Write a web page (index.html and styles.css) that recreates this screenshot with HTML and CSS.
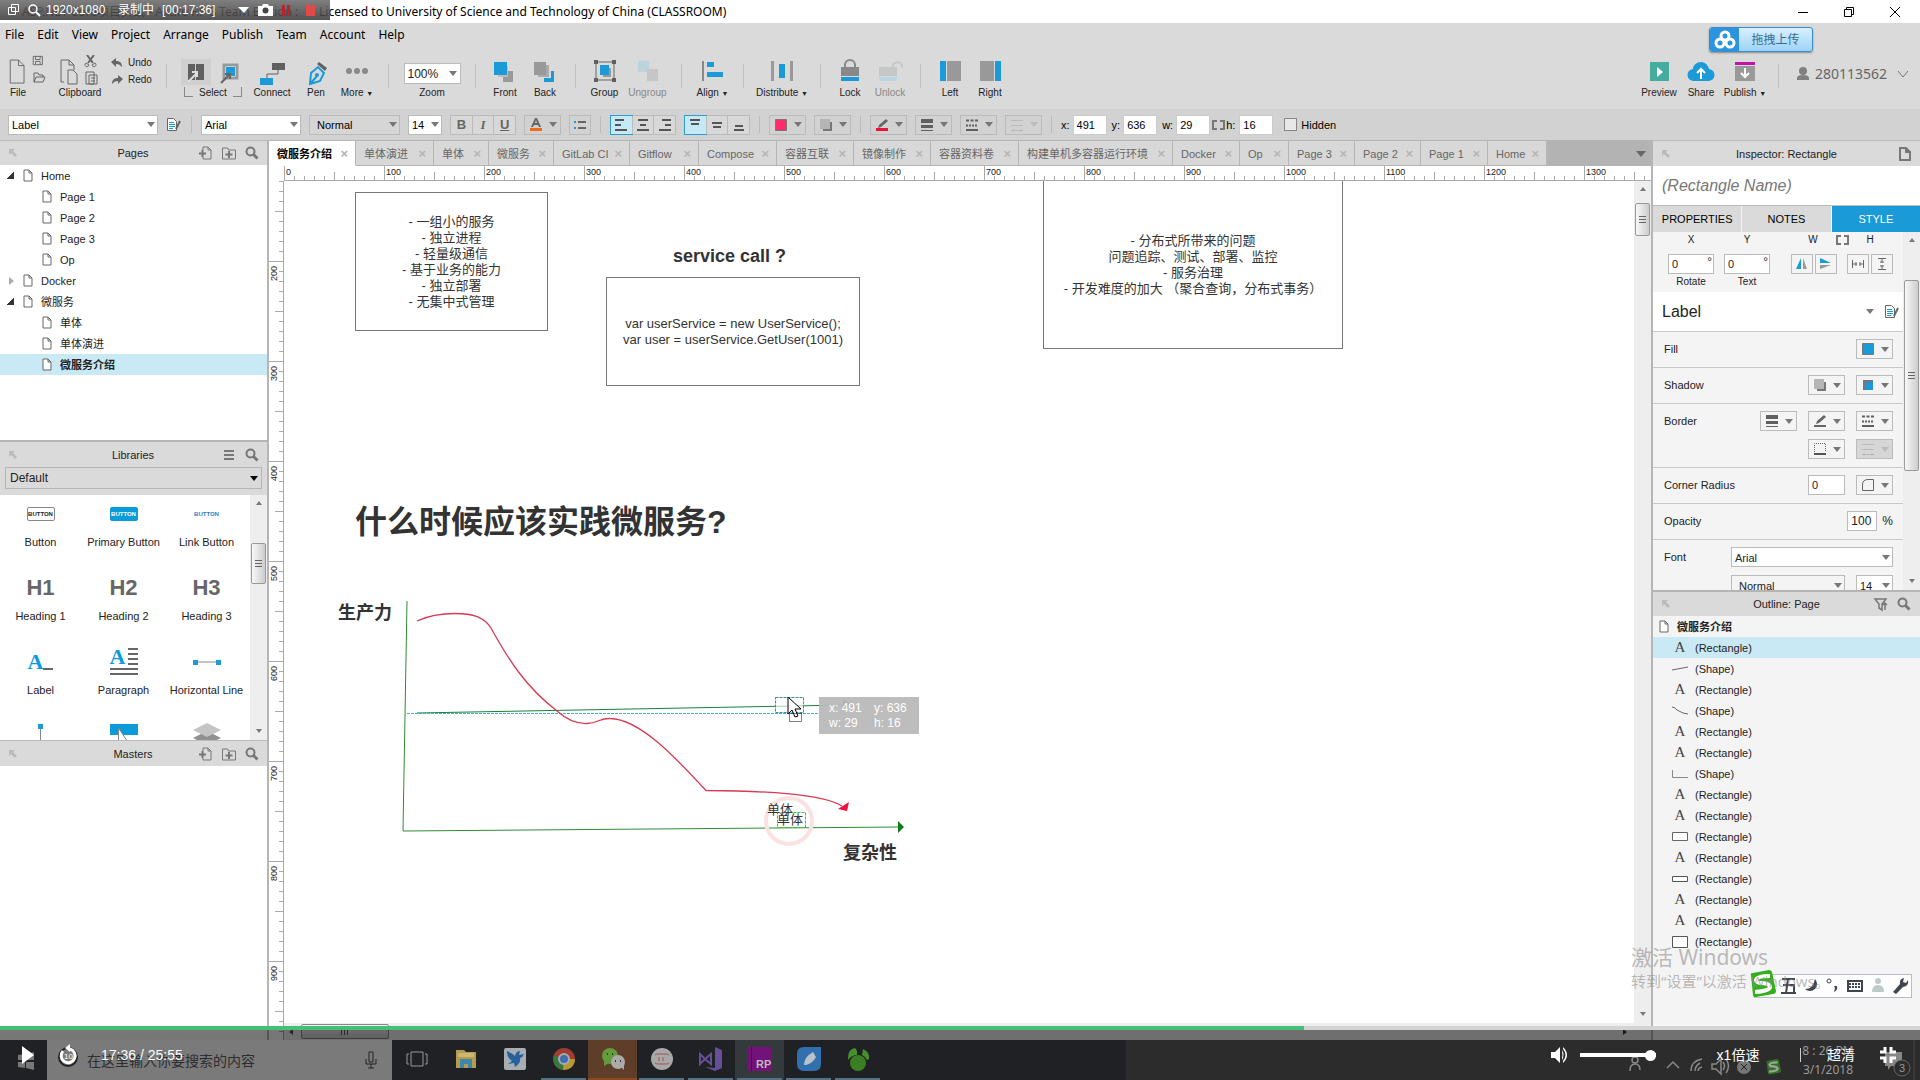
FILE: index.html
```html
<!DOCTYPE html>
<html lang="zh-CN">
<head>
<meta charset="utf-8">
<title>Axure RP 8 Team Edition</title>
<link rel="stylesheet" href="styles.css">
</head>
<body>
<svg class="defs" aria-hidden="true">
  <symbol id="page" viewBox="0 0 10 13"><path d="M1 1h5l3 3v8H1zM6 1v3h3" fill="#fff" stroke="#666"/></symbol>
  <symbol id="search" viewBox="0 0 14 14"><circle cx="5.500" cy="5.500" r="4" fill="none" stroke="#777" stroke-width="2"/><path d="M8.500 8.500l4 4" stroke="#777" stroke-width="3"/></symbol>
  <symbol id="pin" viewBox="0 0 8 8"><path d="M0 0h6L4 2l4 4-2 2-4-4-2 2z" fill="#bbb"/></symbol>
  <symbol id="addpage" viewBox="0 0 14 14"><path d="M4 4V1h5l3 3v9H4v-2M9 1v3h3" fill="none" stroke="#777"/><path d="M0 7.500h7M3.500 4v7" stroke="#777" stroke-width="2"/></symbol>
  <symbol id="addfolder" viewBox="0 0 14 14"><path d="M.500 2h5l1 2h7v9H.500z" fill="none" stroke="#777"/><path d="M3.500 8.500h7M7 5v7" stroke="#777" stroke-width="2"/></symbol>
  <symbol id="styleedit" viewBox="0 0 14 13"><path d="M.500.500h6l3 3v9h-9z" fill="#fff" stroke="#666"/><path d="M2 4.500h5M2 6.500h6M2 8.500h6M2 10.500h4" stroke="#1a9bd7"/><path d="M13 3l-4 8" stroke="#666" stroke-width="2"/></symbol>
  <symbol id="shadow" viewBox="0 0 14 14"><path d="M4 4h9v9H4z" fill="#777"/><path d="M1 1h10v10H1z" fill="#b5b5b5"/></symbol>
  <symbol id="lines" viewBox="0 0 14 14"><path d="M1 1h12v4H1zM1 7h12v3H1zM1 12h12v1H1z" fill="#606060"/></symbol>
  <symbol id="dashes" viewBox="0 0 14 14"><path d="M1 2.500h12" stroke="#606060" stroke-width="2" stroke-dasharray="3 1.500"/><path d="M1 7.500h12" stroke="#606060" stroke-width="2" stroke-dasharray="2 1"/><path d="M1 12h12" stroke="#606060" stroke-width="2"/></symbol>
  <symbol id="arrows" viewBox="0 0 14 14"><path d="M1 2.500h12M1 7.500h12M1 12.500h12M3 11v3M11 11v3" stroke="#bbb"/></symbol>
  <symbol id="pencil" viewBox="0 0 14 14"><path d="M3 10l1-3 7-6 2 2-7 6z" fill="#666"/></symbol>
  <symbol id="bracket" viewBox="0 0 13 10"><path d="M5 1H1v8h4M8 1h4v8H8" fill="none" stroke="#777" stroke-width="2"/></symbol>
  <symbol id="sogou" viewBox="0 0 28 28"><path d="M3 5Q2 3 5 3L21 0q2 0 3 2l4 19q0 3-3 3L8 27q-3 0-3-2z" fill="#34ae1c"/><path d="M22 6Q9 6 8 10q0 3 7 3 7 1 7 4 0 4-15 5" fill="none" stroke="#fff" stroke-width="4"/></symbol>
</svg>

<div class="app">
  <header class="titlebar">
    <div class="apptitle"><span class="docname">ASP.NET Core项目实战 - Axure RP 8 Team Edition :</span><span>Licensed to University of Science and Technology of China (CLASSROOM)</span></div>
    <div class="winbtns">
      <button aria-label="Minimize"><svg width="12" height="12"><path d="M1 6.500h10" stroke="#000"/></svg></button>
      <button aria-label="Restore"><svg width="12" height="12"><path d="M1.500 3.500h7v7h-7zM3.500 3V1.500h7v7H9" fill="none" stroke="#000"/></svg></button>
      <button aria-label="Close"><svg width="12" height="12"><path d="M1 1l10 10M11 1L1 11" stroke="#000"/></svg></button>
    </div>
    <div class="recorder">
      <svg width="34" height="16"><path d="M1.500 5.500h7v7h-7zM4.500 2.500h7v7h-7z" fill="none" stroke="#fff"/><circle cx="26" cy="7" r="4" fill="none" stroke="#fff" stroke-width="1.500"/><path d="M29 10l4 4" stroke="#fff" stroke-width="2"/></svg>
      <span>1920x1080</span><span class="rec-state">录制中</span><span class="rec-time">[00:17:36]</span>
      <svg class="rec-icons" width="80" height="16"><path d="M0 5h11l-5 6z" fill="#fff"/><path d="M20 4h4l1-2h5l1 2h4v10H20z" fill="#fff"/><circle cx="27.500" cy="8.500" r="3" fill="#444"/><path d="M44 3h3v11h-3zM49 3h3v11h-3z" fill="#b8232d"/><path d="M68 3h9v11h-9z" fill="#e04a4a"/></svg>
    </div>
  </header>

  <nav class="menubar">
    <a href="#">File</a><a href="#">Edit</a><a href="#">View</a><a href="#">Project</a><a href="#">Arrange</a><a href="#">Publish</a><a href="#">Team</a><a href="#">Account</a><a href="#">Help</a>
  </nav>

  <div class="toolbar">
    <div class="tg g-file">
      <button class="tool"><svg width="42" height="30"><path d="M3.500 5.500h9l6 6v19h-15zM12.500 5.500v6h6M28.500 1.500h10v9h-10zM31 1v4h5V1M31 10V7h5v3" transform="scale(.92)" fill="none" stroke="#666"/><path d="M27 27V18h4l1 2h4v2M27 27l2-5h9l-2 5z" fill="none" stroke="#666"/></svg><span class="tl-left">File</span></button>
      <button class="tool"><svg width="44" height="30"><path d="M6 27H3V5h8l5 5v5M11 5v5h5M10 15h5l4 4v10h-9z" fill="none" stroke="#666"/><path d="M29 0l6 8M36 0l-6 8" stroke="#666" stroke-width="2"/><path d="M28 8a2 2 0 1 0 3 2zM37 8a2 2 0 1 1-3 2z" fill="none" stroke="#666"/><path d="M28 17h8v12h-8zM31 20h8v9h-8zM33 23h4M33 26h4" fill="#dadada" stroke="#666"/></svg><span>Clipboard</span></button>
      <div class="undo">
        <button><svg width="12" height="10"><path d="M5 0v3c4 0 6 2 6 6-2-2-3-3-6-3v3L0 4z" fill="#666"/></svg>Undo</button>
        <button><svg width="12" height="10"><path d="M7 0v3C3 3 1 5 1 9c2-2 3-3 6-3v3l5-5z" fill="#666"/></svg>Redo</button>
      </div>
    </div>
    <i class="tsep"></i>
    <div class="tg g-select">
      <button class="tool"><svg width="64" height="28"><path d="M0-2h30v28H0z" fill="#cfcfcf"/><path d="M7 5h7v16H7zM15 5h8v16h-8z" fill="#606060"/><path d="M7 23l9-9M11 13h5v5" stroke="#ddd" stroke-width="2" fill="none"/><path d="M43 6h13v13H43z" fill="#fff" stroke="#999" stroke-width="3"/><path d="M45 8h9v9h-9z" fill="#1a9bd7"/><path d="M40 24l8-8M44 15h5v5" stroke="#666" stroke-width="2" fill="none"/></svg><span class="bracketed">Select</span></button>
      <button class="tool"><svg width="28" height="28"><path d="M14 4h13v7H14z" fill="#606060"/><path d="M8 20h13v7H8z" fill="#1a9bd7" transform="translate(-6 -1)"/><path d="M20 11v4H9v4" fill="none" stroke="#606060"/></svg><span>Connect</span></button>
      <button class="tool"><svg width="28" height="28"><path d="M8 25l1-11 7-6 6 6-4 8zM8 25l7-8" fill="none" stroke="#1a9bd7" stroke-width="2"/><circle cx="15" cy="16" r="2" fill="#1a9bd7"/><path d="M15 5l2-2 8 6-2 3z" fill="#606060"/></svg><span>Pen</span></button>
      <button class="tool"><svg width="28" height="28"><circle cx="6" cy="12" r="3" fill="#888"/><circle cx="14" cy="12" r="3" fill="#888"/><circle cx="22" cy="12" r="3" fill="#888"/></svg><span>More <small>▼</small></span></button>
    </div>
    <i class="tsep"></i>
    <div class="tg g-zoom"><label class="tool"><select class="zoom"><option>100%</option></select><span>Zoom</span></label></div>
    <i class="tsep"></i>
    <div class="tg g-order">
      <button class="tool"><svg width="28" height="28"><path d="M12 12h10v11H12z" fill="#999"/><path d="M7 7h10v11H7z" fill="#bbb"/><path d="M3 3h13v13H3z" fill="#1a9bd7"/></svg><span>Front</span></button>
      <button class="tool"><svg width="28" height="28"><path d="M13 12h10v11H13z" fill="#1a9bd7"/><path d="M8 7h12v12H8z" fill="#dadada"/><path d="M7 6h11v12H7z" fill="#aaa"/><path d="M3 3h12v13H3z" fill="#999"/></svg><span>Back</span></button>
    </div>
    <i class="tsep"></i>
    <div class="tg g-group">
      <button class="tool"><svg width="28" height="28"><path d="M5 3h18v18H5z" fill="none" stroke="#666"/><path d="M12 9h8v9h-8z" fill="#999"/><path d="M9 6h9v10H9z" fill="#1a9bd7"/><path d="M3 1h4v4H3zM21 1h4v4h-4zM3 19h4v4H3zM21 19h4v4h-4z" fill="#606060"/></svg><span>Group</span></button>
      <button class="tool off"><svg width="28" height="28"><path d="M4 2h11v11H4z" fill="#bcd3dd"/><path d="M13 10h11v12H13z" fill="#c6c6c6"/></svg><span>Ungroup</span></button>
    </div>
    <i class="tsep"></i>
    <div class="tg g-align"><button class="tool"><svg width="28" height="28"><path d="M4 2h2v20H4z" fill="#888"/><path d="M9 3h7v5H9zM9 13h16v5H9z" fill="#1a9bd7"/></svg><span>Align <small>▼</small></span></button></div>
    <i class="tsep"></i>
    <div class="tg g-dist"><button class="tool"><svg width="28" height="28"><path d="M3 2h3v20H3zM22 2h3v20h-3z" fill="#999"/><path d="M11 5h6v14h-6z" fill="#1a9bd7"/></svg><span>Distribute <small>▼</small></span></button></div>
    <i class="tsep"></i>
    <div class="tg g-order">
      <button class="tool"><svg width="28" height="28"><path d="M9 9V6a5 5 0 0 1 10 0v3" fill="none" stroke="#888" stroke-width="2"/><path d="M5 8h18v9H5z" fill="#888"/><path d="M5 18h18v4H5z" fill="#1a9bd7"/></svg><span>Lock</span></button>
      <button class="tool off"><svg width="28" height="28"><path d="M17 9V6a5 5 0 0 1 9 0v3" fill="none" stroke="#c8c8c8" stroke-width="2"/><path d="M3 8h18v9H3z" fill="#c6c6c6"/><path d="M3 18h18v4H3z" fill="#b8d5e2"/></svg><span>Unlock</span></button>
    </div>
    <i class="tsep"></i>
    <div class="tg g-order">
      <button class="tool"><svg width="28" height="28"><path d="M4 2h6v20H4z" fill="#1a9bd7"/><path d="M11 2h14v20H11z" fill="#999"/></svg><span>Left</span></button>
      <button class="tool"><svg width="28" height="28"><path d="M4 2h14v20H4z" fill="#999"/><path d="M19 2h6v20h-6z" fill="#1a9bd7"/></svg><span>Right</span></button>
    </div>
    <div class="tg g-right">
      <button class="tool"><svg width="28" height="28"><path d="M5 3h19v19H5z" fill="#46ac9d"/><path d="M12 8l6 5-6 5z" fill="#fff"/></svg><span>Preview</span></button>
      <button class="tool"><svg width="28" height="28"><path d="M7 22a6 6 0 0 1-1-12C6 6 10 3 14 3s7 3 8 7a6 6 0 0 1-1 12z" fill="#1a9bd7"/><path d="M14 20v-9M10 14l4-4 4 4" fill="none" stroke="#fff" stroke-width="2"/></svg><span>Share</span></button>
      <button class="tool"><svg width="28" height="28"><path d="M4 3h20v3H4z" fill="#c114a5"/><path d="M4 7h20v15H4z" fill="#999"/><path d="M14 9v9M10 14l4 4 4-4" fill="none" stroke="#fff" stroke-width="2"/></svg><span>Publish <small>▼</small></span></button>
    </div>
    <i class="tsep"></i>
    <button class="user"><svg width="14" height="14"><circle cx="7" cy="4" r="4" fill="#808080"/><path d="M1 13V11q0-3 6-3t6 3v2z" fill="#808080"/></svg>280113562<svg class="chev" width="12" height="8"><path d="M1 1l5 6 5-6" fill="none" stroke="#777"/></svg></button>
    <button class="upload"><span class="cloudico"><svg width="20" height="20"><circle cx="10" cy="6" r="4"/><circle cx="5" cy="13" r="4"/><circle cx="15" cy="13" r="4"/></svg></span><span class="uptext">拖拽上传</span></button>
  </div>

  <div class="formatbar">
    <select class="box w150" aria-label="Widget style"><option>Label</option></select>
    <button class="bare" aria-label="Manage styles"><svg width="16" height="13"><use href="#styleedit" width="14" height="13"/></svg></button>
    <i class="fsep"></i>
    <select class="box w100" aria-label="Font"><option>Arial</option></select>
    <select class="box w91 grey" aria-label="Weight"><option>Normal</option></select>
    <select class="box w34" aria-label="Size"><option>14</option></select>
    <div class="seg"><button><b>B</b></button><button><em>I</em></button><button><u>U</u></button></div>
    <button class="dd" aria-label="Text color"><svg width="14" height="14"><path d="M2 9L6 0h2l4 9h-2L9 7H5L4 9zM6 5h2L7 2z" fill="#666"/><path d="M1 10h12v3H1z" fill="#f06a1c"/></svg></button>
    <button class="sq" aria-label="Bullets"><svg width="14" height="12"><path d="M1 2h2v2H1zM1 8h2v2H1z" fill="#1a9bd7"/><path d="M5 2h8v2H5zM5 8h8v2H5z" fill="#666"/></svg></button>
    <i class="fsep"></i>
    <div class="seg"><button class="on" aria-label="Left"><svg width="14" height="14"><path d="M1 2h9M1 7h6M1 12h12" stroke="#555" stroke-width="2"/></svg></button><button aria-label="Center"><svg width="14" height="14"><path d="M2 2h10M4 7h6M1 12h12" stroke="#555" stroke-width="2"/></svg></button><button aria-label="Right"><svg width="14" height="14"><path d="M4 2h9M7 7h6M1 12h12" stroke="#555" stroke-width="2"/></svg></button></div>
    <div class="seg"><button class="on" aria-label="Top"><svg width="14" height="14"><path d="M2 2h10M3 6h8" stroke="#555" stroke-width="2"/></svg></button><button aria-label="Middle"><svg width="14" height="14"><path d="M2 5h10M3 9h8" stroke="#555" stroke-width="2"/></svg></button><button aria-label="Bottom"><svg width="14" height="14"><path d="M3 8h8M2 12h10" stroke="#555" stroke-width="2"/></svg></button></div>
    <i class="fsep"></i>
    <button class="dd" aria-label="Fill"><svg width="14" height="14"><path d="M1.500 1.500h11v11h-11z" fill="#ff2b6b" stroke="#777"/></svg></button>
    <button class="dd" aria-label="Shadow"><svg width="14" height="14"><use href="#shadow"/></svg></button>
    <i class="fsep"></i>
    <button class="dd" aria-label="Line color"><svg width="14" height="14"><use href="#pencil"/><path d="M1 10h12v3H1z" fill="#e8133f"/></svg></button>
    <button class="dd" aria-label="Line width"><svg width="14" height="14"><use href="#lines"/></svg></button>
    <button class="dd" aria-label="Line style"><svg width="14" height="14"><use href="#dashes"/></svg></button>
    <button class="dd dim" aria-label="Arrow style"><svg width="14" height="14"><use href="#arrows"/></svg></button>
    <i class="fsep"></i>
    <div class="coords">
      <label>x:<input value="491"></label><label>y:<input value="636"></label><label class="wide">w:<input value="29"></label>
      <label class="hgt"><svg width="13" height="10"><use href="#bracket"/></svg>h:<input value="16"></label>
    </div>
    <label class="hidden"><input type="checkbox">Hidden</label>
  </div>

  <main class="work">
    <aside class="left">
      <section class="pages">
        <h2 class="phead"><svg width="8" height="8"><use href="#pin"/></svg><span>Pages</span><i><svg width="14" height="14"><use href="#addpage"/></svg><svg width="14" height="14"><use href="#addfolder"/></svg><svg width="14" height="14"><use href="#search"/></svg></i></h2>
        <ul class="tree">
          <li><b class="open"></b><svg><use href="#page"/></svg>Home</li>
          <li class="sub"><svg><use href="#page"/></svg>Page 1</li>
          <li class="sub"><svg><use href="#page"/></svg>Page 2</li>
          <li class="sub"><svg><use href="#page"/></svg>Page 3</li>
          <li class="sub"><svg><use href="#page"/></svg>Op</li>
          <li><b class="closed"></b><svg><use href="#page"/></svg>Docker</li>
          <li><b class="open"></b><svg><use href="#page"/></svg>微服务</li>
          <li class="sub"><svg><use href="#page"/></svg>单体</li>
          <li class="sub"><svg><use href="#page"/></svg>单体演进</li>
          <li class="sub sel"><svg><use href="#page"/></svg>微服务介绍</li>
        </ul>
      </section>
      <section class="libs">
        <h2 class="phead"><svg width="8" height="8"><use href="#pin"/></svg><span>Libraries</span><i><svg width="14" height="14"><path d="M2 3h10M2 7h10M2 11h10" stroke="#777" stroke-width="2"/></svg><svg width="14" height="14"><use href="#search"/></svg></i></h2>
        <div class="libsel"><select aria-label="Library"><option>Default</option></select></div>
        <div class="libbody">
          <div class="libgrid">
            <figure><div><span class="mini">BUTTON</span></div><figcaption>Button</figcaption></figure>
            <figure><div><span class="mini prim">BUTTON</span></div><figcaption>Primary Button</figcaption></figure>
            <figure><div><span class="mini lnk">BUTTON</span></div><figcaption>Link Button</figcaption></figure>
            <figure><div class="hx">H1</div><figcaption>Heading 1</figcaption></figure>
            <figure><div class="hx">H2</div><figcaption>Heading 2</figcaption></figure>
            <figure><div class="hx">H3</div><figcaption>Heading 3</figcaption></figure>
            <figure><div class="glyph"><span>A</span><svg width="10" height="16"><path d="M0 15h10" stroke="#666" stroke-width="2"/></svg></div><figcaption>Label</figcaption></figure>
            <figure><div class="para"><span>A</span><svg width="28" height="28"><path d="M18 1h10M18 6h10M18 11h10M18 16h10M0 21h28M0 26h28" stroke="#666" stroke-width="2"/></svg></div><figcaption>Paragraph</figcaption></figure>
            <figure><div><svg width="28" height="6"><path d="M0 3h28" stroke="#888"/><path d="M0 1h5v5H0zM23 1h5v5h-5z" fill="#1a9bd7"/></svg></div><figcaption>Horizontal Line</figcaption></figure>
            <figure><div><svg width="28" height="30"><path d="M13.500 4v26" stroke="#888"/><path d="M11 3h5v5h-5z" fill="#1a9bd7"/></svg></div></figure>
            <figure><div><svg width="28" height="30"><path d="M0 3h28v11H0z" fill="#0c9bd9"/><path d="M8.500 7v24h16z" fill="#fff" stroke="#888"/></svg></div></figure>
            <figure><div><svg width="28" height="30"><path d="M0 17l14-7 14 7-14 7z" fill="#909090"/><path d="M0 9l14-7 14 7-14 7z" fill="#c4c4c4"/></svg></div></figure>
          </div>
          <div class="vscroll"><i class="up"></i><i class="thumb"></i><i class="down"></i></div>
        </div>
      </section>
      <section class="masters">
        <h2 class="phead"><svg width="8" height="8"><use href="#pin"/></svg><span>Masters</span><i><svg width="14" height="14"><use href="#addpage"/></svg><svg width="14" height="14"><use href="#addfolder"/></svg><svg width="14" height="14"><use href="#search"/></svg></i></h2>
      </section>
    </aside>

    <section class="center">
      <div class="tabs">
        <button class="active">微服务介绍<i>×</i></button><button>单体演进<i>×</i></button><button>单体<i>×</i></button><button>微服务<i>×</i></button><button>GitLab CI<i>×</i></button><button>Gitflow<i>×</i></button><button>Compose<i>×</i></button><button>容器互联<i>×</i></button><button>镜像制作<i>×</i></button><button>容器资料卷<i>×</i></button><button>构建单机多容器运行环境<i>×</i></button><button>Docker<i>×</i></button><button>Op<i>×</i></button><button>Page 3<i>×</i></button><button>Page 2<i>×</i></button><button>Page 1<i>×</i></button><button>Home<i>×</i></button>
        <div class="tabrest"></div>
      </div>
      <div class="hruler"><span>0</span><span>100</span><span>200</span><span>300</span><span>400</span><span>500</span><span>600</span><span>700</span><span>800</span><span>900</span><span>1000</span><span>1100</span><span>1200</span><span>1300</span></div>
      <div class="stage">
        <div class="vruler"><span>200</span><span>300</span><span>400</span><span>500</span><span>600</span><span>700</span><span>800</span><span>900</span></div>
        <div class="canvas">
          <div class="shape s1">- 一组小的服务<br>- 独立进程<br>- 轻量级通信<br>- 基于业务的能力<br>- 独立部署<br>- 无集中式管理</div>
          <div class="shape s2">var userService = new UserService();<br>var user = userService.GetUser(1001)</div>
          <div class="shape s3">- 分布式所带来的问题<br>问题追踪、测试、部署、监控<br>- 服务治理<br>- 开发难度的加大 （聚合查询，分布式事务）</div>
          <div class="txt call">service call ?</div>
          <h1 class="txt big">什么时候应该实践微服务?</h1>
          <svg class="chart" width="700" height="300" viewBox="284 581 700 300">
            <path d="M407 601L403 831L899 827" fill="none" stroke="#2f8a35"/>
            <path d="M898 821l6 6-6 6z" fill="#0b7d14"/>
            <path d="M417 713L846 705" stroke="#1c7f3c"/><path d="M843 699l9 5-9 5z" fill="#0b7d14"/>
            <path d="M407 713.500H819" stroke="#35b6cf" stroke-dasharray="3 1"/>
            <path d="M417 621C430 615 443 613.500 455 613.500C473 613.500 484 617 491 628C509 661 527 688 557 711C566 719 575 724 587 723.500C598 723 600 718 610 718.500C640 719 676 758 706 790.500C760 791 822 793 842 806" fill="none" stroke="#d63a55" stroke-width="1.300"/>
            <path d="M838 809l11-7-2 9z" fill="#ee1341"/>
            <circle cx="789" cy="821" r="23" fill="none" stroke="#fbe2e2" stroke-width="4"/>
            <path d="M777.500 812.500h28v15h-28z" fill="none" stroke="#37c837" stroke-dasharray="3 1"/>
            <path d="M775.500 697.500h28v15h-28z" fill="#fff" fill-opacity=".6" stroke="#358fa8" stroke-dasharray="3 1"/>
            <path d="M788 697v17l4-4 3 7 3-1-3-7h6z" fill="#fff" stroke="#000"/>
            <path d="M789.500 713.500h12v8h-12z" fill="none" stroke="#000" stroke-dasharray="1 1"/>
          </svg>
          <div class="txt ylab">生产力</div><div class="txt xlab">复杂性</div>
          <div class="txt mono1">单体</div><div class="txt mono2">单体</div>
          <div class="tip"><span>x: 491</span><span>y: 636</span><span>w: 29</span><span>h: 16</span></div>
        </div>
        <div class="vscroll"><i class="up"></i><i class="thumb"></i><i class="down"></i></div>
        <div class="hscroll"><i class="lt"></i><i class="hthumb"></i><i class="rt"></i></div>
      </div>
    </section>

    <aside class="right">
      <section class="inspector">
        <h2 class="phead"><svg width="8" height="8"><use href="#pin"/></svg><span>Inspector: Rectangle</span><i><svg width="12" height="14"><path d="M1 1h6l4 4v8H1zM7 1v4h4" fill="none" stroke="#777" stroke-width="2"/></svg></i></h2>
        <input class="rname" placeholder="(Rectangle Name)" aria-label="Rectangle Name">
        <div class="itabs"><button>PROPERTIES</button><button>NOTES</button><button class="on">STYLE</button></div>
        <div class="ibody">
          <div class="iform">
            <div class="xywh"><span>X</span><span>Y</span><span>W</span><svg width="13" height="10"><use href="#bracket"/></svg><span>H</span></div>
            <div class="rot">
              <label><span class="deg"><input value="0"></span>Rotate</label>
              <label><span class="deg"><input value="0"></span>Text</label>
              <div class="flips">
                <button aria-label="Flip horizontal"><svg width="12" height="12"><path d="M5 0v11H0z" fill="#1a9bd7"/><path d="M7 0v11h4z" fill="#999"/></svg></button>
                <button aria-label="Flip vertical"><svg width="12" height="12"><path d="M0 0v5h11z" fill="#1a9bd7"/><path d="M0 11V7h11z" fill="#999"/></svg></button>
                <button aria-label="Fit width"><svg width="12" height="12"><path d="M.500 2v8M11.500 2v8M1 6h4M7 6h4M4 4v4M8 4v4" stroke="#666"/></svg></button>
                <button aria-label="Fit height"><svg width="12" height="12"><path d="M2 .500h8M2 11.500h8M6 1v4M6 7v4M4 4h4M4 8h4" stroke="#666"/></svg></button>
              </div>
            </div>
            <div class="irow stylename"><span>Label</span><b class="caret"></b><svg width="14" height="13"><use href="#styleedit"/></svg></div>
            <div class="irow"><span>Fill</span><button class="dd"><svg width="14" height="14"><path d="M1.500 1.500h11v11h-11z" fill="#1a9bd7" stroke="#777"/></svg></button></div>
            <div class="irow"><span>Shadow</span><button class="dd"><svg width="14" height="14"><use href="#shadow"/></svg></button><button class="dd"><svg width="14" height="14"><path d="M2 2h10v10H2z" fill="#777"/><path d="M4 4h8v8H4z" fill="#1a9bd7"/></svg></button></div>
            <div class="irow border"><span>Border</span><div class="bgrid"><button class="dd"><svg width="14" height="14"><use href="#lines"/></svg></button><button class="dd"><svg width="14" height="14"><use href="#pencil"/><path d="M1 11h12v2H1z" fill="#666"/></svg></button><button class="dd"><svg width="14" height="14"><use href="#dashes"/></svg></button><i></i><button class="dd"><svg width="14" height="14"><path d="M1.500 10V1.500h11V10" fill="none" stroke="#666" stroke-dasharray="1 1"/><path d="M1 12h12" stroke="#555" stroke-width="2"/></svg></button><button class="dd gone"><svg width="14" height="14"><use href="#arrows"/></svg></button></div></div>
            <div class="irow"><span>Corner Radius</span><input class="w37" value="0" aria-label="Corner Radius"><button class="dd"><svg width="14" height="14"><path d="M1.500 12.500V7q0-5.500 5.500-5.500h5.500v11z" fill="none" stroke="#666"/></svg></button></div>
            <div class="irow"><span>Opacity</span><label class="pct"><input class="w30" value="100" aria-label="Opacity">%</label></div>
            <div class="irow font"><span>Font</span><div class="fgrid"><select class="box" aria-label="Font family"><option>Arial</option></select><select class="box clear" aria-label="Font weight"><option>Normal</option></select><select class="box" aria-label="Font size"><option>14</option></select></div></div>
          </div>
          <div class="vscroll"><i class="up"></i><i class="thumb"></i><i class="down"></i></div>
        </div>
      </section>
      <section class="outline">
        <h2 class="phead"><svg width="8" height="8"><use href="#pin"/></svg><span>Outline: Page</span><i><svg width="14" height="14"><path d="M1 2h11L8 7v6L5 11V7zM11 13V6M9 8l2-2 2 2" fill="none" stroke="#777" stroke-width="1.500"/></svg><svg width="14" height="14"><use href="#search"/></svg></i></h2>
        <ul class="olist">
          <li class="root"><svg width="10" height="13"><use href="#page"/></svg>微服务介绍</li>
          <li class="sel"><b>A</b>(Rectangle)</li>
          <li><svg width="16" height="12"><path d="M0 7l16-3" stroke="#666"/></svg>(Shape)</li>
          <li><b>A</b>(Rectangle)</li>
          <li><svg width="16" height="12"><path d="M0 2q3 0 5 3l6 3 5 1" fill="none" stroke="#666"/></svg>(Shape)</li>
          <li><b>A</b>(Rectangle)</li>
          <li><b>A</b>(Rectangle)</li>
          <li><svg width="16" height="12"><path d="M.500 2v7.500H16" fill="none" stroke="#888"/></svg>(Shape)</li>
          <li><b>A</b>(Rectangle)</li>
          <li><b>A</b>(Rectangle)</li>
          <li><svg width="16" height="12"><path d="M.500 1.500h15v8H.500z" fill="#fff" stroke="#666"/></svg>(Rectangle)</li>
          <li><b>A</b>(Rectangle)</li>
          <li><svg width="16" height="12"><path d="M.500 3.500h15v5H.500z" fill="#fff" stroke="#555"/></svg>(Rectangle)</li>
          <li><b>A</b>(Rectangle)</li>
          <li><b>A</b>(Rectangle)</li>
          <li><svg width="16" height="12"><path d="M.500.500h15v11H.500z" fill="#fff" stroke="#555"/></svg>(Rectangle)</li>
        </ul>
      </section>
    </aside>
  </main>

  <footer class="taskbar">
    <button class="start" aria-label="Start"><svg width="16" height="18"><path d="M0 3l7-1v6H0zM8 2l8-2v8H8zM0 10h7v6l-7-1zM8 10h8v8l-8-2z" fill="#777"/></svg></button>
    <div class="tsearch"><input value="在这里输入你要搜索的内容" aria-label="Search"><svg width="12" height="18"><path d="M4 1h4v10H4zM1 8v5h10V8M6 13v4M3 17h6" fill="none" stroke="#222"/></svg></div>
    <button class="app-i"><svg width="22" height="24"><path d="M5 5h12v14H5zM3 7H1v10h2M19 7h2v10h-2" fill="none" stroke="#999"/></svg></button>
    <button class="app-i"><svg width="22" height="24"><path d="M1 3h8l2 2h10v16H1z" fill="#b59a50"/><path d="M3 6h16v4H3z" fill="#cdb870"/><path d="M5 12h12v9h-4v-4H9v4H5z" fill="#3f87a8"/></svg></button>
    <button class="app-i"><svg width="22" height="24"><rect width="22" height="22" y="1" rx="2" fill="#a7adb3"/><path d="M3 4q5 2 8 5 1-5 5-5l-1 4 5-1q-1 3-4 4 1 5-5 9l-1-4-6 1 4-3q-5-3-5-10z" fill="#27619b"/></svg></button>
    <button class="app-i run"><svg width="22" height="24"><circle cx="11" cy="12" r="11" fill="#a43b30"/><path d="M11 12L1 8a11 11 0 0 0 9 15z" fill="#35793e"/><path d="M11 12h11a11 11 0 0 1-12 11z" fill="#b79a32"/><circle cx="11" cy="12" r="5" fill="#3f6fae" stroke="#aaa" stroke-width="2"/></svg></button>
    <button class="app-i wx"><svg width="24" height="24"><circle cx="9" cy="9" r="8" fill="#659a3d"/><path d="M3 13v6l5-3z" fill="#659a3d"/><circle cx="17" cy="15" r="7" fill="#aaa"/><path d="M19 19l4 4v-6z" fill="#aaa"/><path d="M6 6h1v2H6zM11 6h1v2h-1zM14 13h1v2h-1zM19 13h1v2h-1z" fill="#333"/></svg></button>
    <button class="app-i run"><svg width="22" height="24"><circle cx="11" cy="12" r="11" fill="#a8a8a8"/><path d="M4 8q1-1 3-1h8q2 0 3 1M4 16q1 1 3 1h8q2 0 3-1M8 10v4M12 10v4" fill="none" stroke="#a55252"/></svg></button>
    <button class="app-i run"><svg width="24" height="24"><path d="M16 0l7 3v18l-7 3-10-4 10 1z" fill="#655097"/><path d="M1 7l5 5-5 5zM6 12l6-5v10z" fill="none" stroke="#655097" stroke-width="2"/></svg></button>
    <button class="app-i run rp"><svg width="24" height="24"><path d="M0 0h24v24H0z" fill="#731279"/><path d="M3 0h1v24H3z" fill="#45114d"/><text x="8" y="21" fill="#bbb" font-family="Liberation Sans, sans-serif" font-weight="bold" font-size="11">RP</text></svg></button>
    <button class="app-i run"><svg width="24" height="24"><path d="M7 0h17v17q0 7-7 7H7q-7 0-7-7V7q0-7 7-7z" fill="#316fae"/><path d="M7 18q0-8 9-13l3 5q-3 6-10 8z" fill="#b8c2cc"/></svg></button>
    <button class="app-i run"><svg width="24" height="24"><circle cx="12" cy="16" r="8" fill="#3b7f24"/><path d="M2 11q0-9 7-10 3 3 2 7-5 0-9 5zM17 2q7 3 6 10l-2 1q-2-4-5-5z" fill="#468e2e"/></svg></button>
    <div class="tray">
      <svg width="285" height="40"><g fill="none" stroke="#888" stroke-width="1.500"><circle cx="9" cy="20" r="3"/><path d="M4 31q0-7 5-7t5 6M41 28l6-6 6 6M69 31q0-5 5-8M65 31q0-10 11-12M72 31q0-3 4-4M86 24h4l5-5v15l-5-5h-4zM97 22q3 4 0 8M100 19q5 7 0 14"/></g><circle cx="118" cy="27" r="7" fill="#777"/><path d="M115 24l6 6M121 24l-6 6" stroke="#222"/><use href="#sogou" x="139" y="18" width="16" height="18" opacity=".55"/></svg>
      <div class="clock"><span>8 : 26 PM</span><span>3/1/2018</span></div>
      <svg class="note" width="38" height="40"><path d="M8 12h17v14H14l-3 4v-4H8z" fill="#888"/><circle cx="25" cy="28" r="8" fill="#2c2c2c" stroke="#666"/><text x="22" y="32" font-size="11" fill="#999" font-family="Liberation Sans, sans-serif">3</text><path d="M37 0v40" stroke="#444"/></svg>
    </div>
  </footer>

  <div class="ime"><svg class="simg" width="28" height="28"><use href="#sogou"/></svg><svg width="128" height="20"><g fill="none" stroke="#414550" stroke-width="2"><path d="M1 3h13M2 9h11v7M0 17h15M7 3L5 17"/><path d="M67 5h14v10H67z"/><path d="M68 8h12M68 11h12" stroke-dasharray="2 1"/></g><path d="M34 3a7 7 0 1 1-10 10q8 0 10-10z" fill="#414550"/><circle cx="48" cy="5" r="2" fill="none" stroke="#414550"/><path d="M53 10h3q1 4-3 6l1-4z" fill="#414550"/><circle cx="97" cy="5" r="3" fill="#bbcbca"/><path d="M91 16q0-7 6-7t6 7z" fill="#bbcbca"/><path d="M112 16l7-8q-1-5 4-6l-1 4 3 1 2-3q1 6-5 7l-7 7z" fill="#414550"/></svg></div>
  <div class="watermark"><strong>激活 Windows</strong><span>转到“设置”以激活 Windows。</span></div>

  <div class="player">
    <progress value="1304" max="1920" aria-label="Playback"></progress>
    <div class="shade"></div>
    <div class="controls">
      <button aria-label="Play"><svg width="14" height="18"><path d="M1 0l12 9-12 9z" fill="#fff"/></svg></button>
      <button class="back10" aria-label="Back 10 seconds"><svg width="22" height="24"><circle cx="11" cy="14" r="9" fill="none" stroke="#222" stroke-width="2"/><path d="M6 8a7 7 0 1 0 7-2" fill="none" stroke="#fff" stroke-width="3"/><path d="M13 1v8L8 5z" fill="#fff"/><text x="7" y="16" font-size="8" fill="#fff" font-family="Liberation Sans, sans-serif">10</text></svg></button>
      <span class="time">17:36 / 25:55</span>
      <svg class="vol" width="18" height="18"><path d="M1 6h4l5-5v16l-5-5H1zM12 4q3 5 0 10v-2q1-3 0-6zM13 1q8 8 0 16v-2q5-6 0-12z" fill="#fff"/></svg>
      <input class="volume" type="range" min="0" max="100" value="100" aria-label="Volume">
      <button class="rate">x1倍速</button><i class="bar"></i><button class="hd">超清</button>
      <button class="full" aria-label="Exit full screen"><svg width="18" height="18"><path d="M6 1v5H1M12 1v5h5M6 17v-5H1M12 17v-5h5" fill="none" stroke="#fff" stroke-width="3"/></svg></button>
    </div>
  </div>
</div>
</body>
</html>
```
FILE: styles.css
```css
* { box-sizing: border-box; }
body { margin: 0; font: 11px/14px "Liberation Sans", "Noto Sans CJK SC", sans-serif; color: #222; }
button, input, select { font: inherit; color: inherit; margin: 0; padding: 0; border: 0; background: none; border-radius: 0; }
button { display: flex; align-items: center; justify-content: center; white-space: nowrap; }
select { appearance: none; }
ul, h1, h2, figure { margin: 0; padding: 0; list-style: none; font: inherit; }
svg { display: block; flex: none; overflow: visible; }
.defs { position: absolute; width: 0; height: 0; }
.app { position: relative; display: flex; flex-direction: column; height: 100vh; overflow: hidden; background: #dadada; }

/* title and menu */
.titlebar { position: relative; display: flex; justify-content: space-between; height: 23px; flex: none; background: #fff; font: 12px/23px "Noto Sans", "Noto Sans CJK SC", sans-serif; color: #000; }
.apptitle { display: flex; padding-left: 22px; white-space: nowrap; }
.docname { width: 297px; }
.winbtns { display: flex; gap: 34px; padding-right: 19px; align-items: center; }
.recorder { position: absolute; left: 0; top: 0; width: 330px; height: 20px; display: flex; align-items: center; padding-left: 7px; background: linear-gradient(#6d6d6de0, #3c3c3ce0); color: #fff; font: 12px/20px "Liberation Sans", "Noto Sans CJK SC", sans-serif; white-space: nowrap; }
.recorder > span:first-of-type { padding-left: 5px; width: 77px; }
.rec-state { width: 44px; }
.rec-time { width: 76px; }
.menubar { display: flex; gap: 13px; padding-left: 5px; height: 24px; flex: none; font: 12px/24px "Noto Sans", sans-serif; }
.menubar a { color: #000; text-decoration: none; }

/* main toolbar */
.toolbar { position: relative; display: flex; height: 62px; flex: none; padding-top: 12px; color: #222; }
.tg { display: grid; align-content: start; }
.tool { display: flex; flex-direction: column; align-items: center; justify-content: flex-start; gap: 0; height: 42px; line-height: 12px; font-size: 10px; white-space: nowrap; }
.tool svg { height: 28px; overflow: hidden; }
.tool small { font-size: 7px; }
.tsep { width: 1px; height: 24px; margin-top: 5px; background: #c0c0c0; flex: none; }
.off { color: #888; }
.g-file { grid-template-columns: 48px 56px 1fr; width: 166px; padding-left: 4px; margin-top: -4px; }
.g-file .tool svg { height: 32px; }
.tl-left { align-self: flex-start; padding-left: 6px; }
.undo { display: flex; flex-direction: column; gap: 3px; padding: 1px 0 0 3px; font-size: 10px; align-items: flex-start; }
.undo button { gap: 5px; }
.g-select { grid-template-columns: 64px 54px 34px 48px; padding-left: 14px; width: 221px; }
.bracketed { display: flex; gap: 6px; }
.bracketed::before, .bracketed::after { content: ""; width: 8px; height: 9px; border: solid #888; border-width: 0 0 1px 1px; }
.bracketed::after { border-width: 0 1px 1px 0; }
.g-zoom { width: 86px; justify-content: center; }
.g-zoom .tool { padding-top: 4px; height: 42px; gap: 3px; }
.zoom { width: 57px; height: 21px; padding-left: 3px; font-size: 12px; border: 1px solid #bbb; background: url("data:image/svg+xml,%3Csvg xmlns='http://www.w3.org/2000/svg' width='8' height='5'%3E%3Cpath d='M0 0h8L4 5z' fill='%23777'/%3E%3C/svg%3E") right 3px center no-repeat #fff; }
.g-order { grid-template-columns: 40px 40px; width: 99px; padding-left: 9px; }
.g-group { grid-template-columns: 43px 43px; width: 105px; padding-left: 7px; }
.g-align { width: 61px; justify-content: center; }
.g-dist { width: 76px; justify-content: center; }
.g-right { margin-left: auto; grid-template-columns: 42px 42px 46px; padding-right: 10px; }
.user { width: 141px; height: 30px; justify-content: flex-start; gap: 5px; padding-left: 17px; font: 14px/30px "Noto Sans", sans-serif; color: #666; }
.chev { margin-left: 5px; }
.upload { position: absolute; right: 107px; top: -20px; width: 104px; height: 25px; border: 1px solid #3b8ec9; border-radius: 3px; background: linear-gradient(#d8f0fd, #9dd3f6); font-size: 12px; color: #3a6b93; overflow: hidden; align-items: stretch; box-shadow: 0 1px 2px #888; }
.cloudico { width: 29px; background: #2c94de; display: grid; place-items: center; }
.cloudico svg { fill: none; stroke: #fff; stroke-width: 3px; }
.uptext { flex: 1; line-height: 24px; }

/* format bar */
.formatbar { display: flex; align-items: center; gap: 8px; height: 31px; flex: none; padding-left: 8px; background: #d2d2d2; color: #000; }
.fsep { width: 1px; height: 17px; margin: 0 1px; background: #bbb; flex: none; }
.box { height: 20px; padding-left: 3px; border: 1px solid #bbb; background: url("data:image/svg+xml,%3Csvg xmlns='http://www.w3.org/2000/svg' width='8' height='5'%3E%3Cpath d='M0 0h8L4 5z' fill='%23777'/%3E%3C/svg%3E") right 2px center no-repeat #fff; }
.w150 { width: 150px; } .w100 { width: 100px; } .w91 { width: 91px; } .w34 { width: 34px; }
.grey { background-color: #d6d6d6; padding-left: 7px; }
.bare { padding-left: 1px; margin-right: -1px; }
.seg { display: flex; border: 1px solid #bbb; height: 20px; width: 66px; background: #d8d8d8; }
.seg button { flex: 1; color: #666; font-size: 13px; }
.seg button + button { border-left: 1px solid #bbb; }
.seg em { font-family: "Liberation Serif", serif; font-weight: bold; }
.seg u { font-weight: bold; }
.seg .on { background: #c6e9f7; outline: 1px solid #2f9dc9; }
.dd { width: 37px; height: 20px; flex: none; gap: 6px; border: 1px solid #bbb; }
.dd::after, .caret { content: ""; border: 4px solid transparent; border-top: 5px solid #777; border-bottom: 0; }
.dim::after, .gone::after { border-top-color: #bbb; }
.gone { background: #d6d6d6; }
.sq { width: 22px; height: 20px; border: 1px solid #bbb; }
.coords { display: flex; gap: 5px; }
.coords label { display: flex; align-items: center; }
.coords input { width: 34px; height: 20px; margin-left: 3px; padding-left: 3px; background: #fff; border: 1px solid #ccc; }
.coords .hgt { margin-left: -3px; gap: 1px; }
.coords .hgt input { margin-left: 3px; }
.hidden { display: flex; align-items: center; gap: 4px; margin-left: 3px; }
.hidden input { appearance: none; width: 13px; height: 13px; border: 1px solid #888; background: #e8e8e8; }

/* work area */
.work { display: flex; flex: 1; min-height: 0; }
.left, .right { width: 269px; flex: none; display: flex; flex-direction: column; background: #fff; }
.left { border-right: 2px solid #b5b5b5; }
.right { border-left: 2px solid #b5b5b5; background: #f4f4f4; }
.phead { display: grid; grid-template-columns: 50px 1fr 50px; align-items: center; height: 26px; border-top: 1px solid #bbb; background: #dadada; padding: 0 9px; flex: none; }
.phead span { text-align: center; }
.phead i { display: flex; gap: 9px; justify-content: flex-end; }
.left .phead { padding: 0 8px 0 9px; }
.left .phead span { padding-right: 2px; }
.pages { height: 300px; }
.pages .phead { height: 25px; }
.tree li { display: flex; align-items: center; height: 21px; gap: 8px; padding-left: 7px; }
.tree svg { width: 10px; height: 13px; }
.tree .sub { padding-left: 42px; }
.tree .sel { background: #c9e9f5; font-weight: bold; }
.open { width: 7px; height: 7px; margin-right: 1px; background: linear-gradient(135deg, transparent 50%, #333 50%); }
.closed { margin-left: 2px; margin-right: 1px; border: 4px solid transparent; border-left: 5px solid #aaa; border-right: 0; }
.libs { height: 300px; display: flex; flex-direction: column; }
.libs .phead { border-top: 2px solid #b5b5b5; height: 27px; }
.libsel { background: #dadada; padding: 0 5px 6px; }
.libsel select { display: block; width: 100%; height: 22px; border: 1px solid #b5b5b5; padding-left: 4px; font-size: 12px; background: url("data:image/svg+xml,%3Csvg xmlns='http://www.w3.org/2000/svg' width='8' height='5'%3E%3Cpath d='M0 0h8L4 5z'/%3E%3C/svg%3E") right 3px center no-repeat; }
.libbody { display: flex; flex: 1; min-height: 0; overflow: hidden; }
.libgrid { flex: 1; display: grid; grid-template-columns: repeat(3, 83px); grid-auto-rows: 74px; height: 245px; margin-left: -1px; overflow: hidden; }
.libgrid figure { display: flex; flex-direction: column; align-items: center; white-space: nowrap; }
.libgrid figure > div { height: 38px; display: flex; align-items: center; justify-content: center; flex: none; }
.libgrid figcaption { padding-top: 2px; }
.mini { width: 28px; height: 14px; border: 1px solid #888; border-radius: 2px; font: bold 6px/12px "Liberation Sans", sans-serif; text-align: center; }
.prim { background: #0c9bd9; color: #fff; border-color: #0c9bd9; }
.lnk { border-color: transparent; color: #2f7fc2; }
.hx { font-weight: bold; font-size: 22px; color: #666; }
.glyph span, .para span { font: bold 22px/22px "Liberation Serif", serif; color: #0c9bd9; }
.libgrid .para { position: relative; }
.para span { position: absolute; left: 0; top: 3px; }
.vscroll { width: 17px; flex: none; display: flex; flex-direction: column; align-items: center; background: #eee; position: relative; }
.up, .down { border: 3px solid transparent; margin-top: 6px; border-bottom: 4px solid #777; border-top: 0; }
.down { margin: auto 0 7px; border-top: 4px solid #777; border-bottom: 0; }
.thumb { width: 15px; height: 41px; margin-top: 38px; border: 1px solid #999; border-radius: 2px; background: repeating-linear-gradient(#666 0 1px, transparent 1px 3px) center / 7px 8px no-repeat, linear-gradient(90deg, #f8f8f8, #ccc); }
.masters { flex: 1; }

/* canvas */
.center { flex: 1; min-width: 0; display: flex; flex-direction: column; background: #fff; }
.tabs { display: grid; grid-template-columns: 87px 78px 55px 65px 76px 69px 78px 77px 77px 88px 154px 67px 49px 66px 66px 67px 59px 1fr; height: 26px; flex: none; border-top: 1px solid #b5b5b5; }
.tabs button { justify-content: space-between; padding: 1px 7px 0 8px; color: #666; background: #d8d8d8; border-right: 1px solid #b5b5b5; border-bottom: 1px solid #b5b5b5; overflow: hidden; }
.tabs .active { background: #fff; color: #000; font-weight: bold; border-bottom-color: #fff; }
.tabs i { font: bold 13px/14px "Liberation Sans", sans-serif; color: #b5b5b5; }
.tabrest { background: #b3b3b3; display: flex; align-items: center; justify-content: flex-end; padding-right: 5px; }
.tabrest::after { content: ""; border: 5px solid transparent; border-top: 6px solid #666; border-bottom: 0; }
.hruler { display: flex; height: 15px; flex: none; margin-left: 15px; overflow: hidden; border-bottom: 1px solid #aaa; font-size: 9px; line-height: 12px; background: repeating-linear-gradient(90deg, #aaa 0 1px, transparent 1px 100px) 0 0 / 100% 14px no-repeat, repeating-linear-gradient(90deg, #aaa 0 1px, transparent 1px 50px) 0 6px / 100% 8px no-repeat, repeating-linear-gradient(90deg, #aaa 0 1px, transparent 1px 10px) 0 10px / 100% 4px no-repeat; }
.hruler span { width: 100px; flex: none; padding-left: 2px; }
.stage { flex: 1; min-height: 0; display: grid; grid-template-columns: 15px 1fr 17px; grid-template-rows: 1fr 17px; }
.vruler { grid-row: 1 / 3; display: flex; flex-direction: column; overflow: hidden; padding-top: 80px; border-right: 1px solid #aaa; font-size: 9px; line-height: 11px; background: repeating-linear-gradient(#aaa 0 1px, transparent 1px 100px) 0 -20px / 14px 1000px no-repeat, repeating-linear-gradient(#aaa 0 1px, transparent 1px 50px) 6px -20px / 8px 1000px no-repeat, repeating-linear-gradient(#aaa 0 1px, transparent 1px 10px) 10px 0 / 4px 1000px no-repeat; }
.vruler span { height: 100px; flex: none; padding-bottom: 5px; writing-mode: vertical-rl; transform: rotate(180deg); text-align: right; }
.canvas { position: relative; overflow: hidden; background: #fff; color: #333; }
.shape { position: absolute; border: 1px solid #777; display: grid; place-content: center; text-align: center; font-size: 13px; line-height: 16px; white-space: nowrap; background: #fff; }
.s1 { left: 71px; top: 11px; width: 193px; height: 139px; }
.s2 { left: 322px; top: 96px; width: 254px; height: 109px; }
.s3 { left: 759px; top: -1px; width: 300px; height: 169px; }
.txt { position: absolute; white-space: nowrap; font-weight: bold; font-size: 18px; line-height: 20px; }
.call { left: 389px; top: 65px; }
.big { left: 71px; top: 321px; font-size: 32px; line-height: 40px; }
.ylab { left: 54px; top: 422px; }
.xlab { left: 559px; top: 662px; }
.mono1, .mono2 { font-size: 13px; line-height: 16px; font-weight: normal; }
.mono1 { left: 483px; top: 621px; }
.mono2 { left: 493px; top: 631px; }
.chart { position: absolute; left: 0; top: 400px; }
.tip { position: absolute; left: 535px; top: 516px; width: 100px; height: 37px; padding: 3px 10px; display: grid; grid-template-columns: 45px 1fr; align-content: center; font-size: 12px; line-height: 15px; color: #fff; background: #b9b9b9f0; }
.stage .thumb { height: 33px; margin-top: 12px; }
.hscroll { grid-column: 2 / 4; display: flex; align-items: center; background: #eee; padding: 0 24px 0 5px; }
.lt, .rt { border: 3px solid transparent; border-right: 4px solid #555; border-left: 0; }
.rt { margin-left: auto; border-left: 4px solid #333; border-right: 0; }
.hthumb { width: 88px; height: 15px; margin-left: 8px; border: 1px solid #888; border-radius: 2px; background: repeating-linear-gradient(90deg, #555 0 1px, transparent 1px 3px) center / 8px 7px no-repeat, linear-gradient(#f5f5f5, #ccc); }

/* inspector */
.inspector { height: 450px; display: flex; flex-direction: column; flex: none; }
.rname { height: 39px; flex: none; width: 100%; padding-left: 9px; background: #fff; font-size: 16px; font-style: italic; }
.rname::placeholder { color: #777; }
.itabs { display: grid; grid-template-columns: 1fr 1fr 1fr; height: 27px; flex: none; border-top: 1px solid #bbb; font-size: 11px; gap: 1px; background: #f4f4f4; }
.itabs button { background: #dadada; color: #000; }
.itabs .on { background: #1a9bd7; color: #fff; }
.ibody { display: flex; flex: 1; min-height: 0; overflow: hidden; }
.iform { flex: 1; }
.ibody .thumb { height: 191px; margin-top: 38px; }
.xywh { display: grid; grid-template-columns: 46px 46px 44px 13px 44px; column-gap: 10px; padding: 0 0 6px 15px; height: 22px; align-items: center; justify-items: center; font-size: 10px; }
.xywh span:nth-child(3) { margin-left: 22px; }
.xywh svg { margin-left: 4px; }
.xywh span:last-child { margin-right: 18px; }
.rot { display: flex; height: 38px; padding-left: 15px; gap: 10px; font-size: 10px; text-align: center; }
.rot label { display: flex; flex-direction: column; width: 46px; gap: 1px; }
.rot input { width: 46px; height: 20px; padding-left: 3px; border: 1px solid #bbb; background: #fff; font-size: 11px; }
.deg { position: relative; }
.deg::after { content: "°"; position: absolute; right: 2px; top: 1px; font-size: 12px; }
.flips { display: flex; margin-left: 11px; gap: 2px; }
.flips button { width: 22px; height: 20px; border: 1px solid #bbb; }
.flips button:nth-child(3) { margin-left: 8px; }
.irow { display: flex; gap: 11px; height: 36px; padding: 7px 10px 0 11px; border-top: 1px solid #c8c8c8; line-height: 20px; }
.irow > span:first-child { flex: 1; }
.stylename { height: 39px; padding: 0 4px 0 9px; align-items: center; background: #fff; font-size: 16px; border: 0; }
.irow.border { height: 64px; }
.bgrid { display: grid; grid-template-columns: 37px 37px 37px; gap: 8px 11px; align-content: start; }
.irow input { height: 20px; border: 1px solid #bbb; background: #fff; padding-left: 3px; }
.w37 { width: 37px; } .w30 { width: 30px; }
.pct { display: flex; gap: 5px; font-size: 12px; }
.fgrid { display: grid; grid-template-columns: 114px 37px; gap: 8px 11px; }
.fgrid .box:first-child { grid-column: 1 / 3; }
.clear { background-color: #f4f4f4; padding-left: 7px; }
.outline { flex: 1; }
.outline .phead { border-top: 2px solid #b5b5b5; height: 26px; }
.olist li { display: flex; align-items: center; gap: 7px; height: 21px; padding-left: 19px; }
.olist b { width: 16px; text-align: center; font: 15px/21px "Liberation Serif", serif; color: #444; }
.olist .root { padding-left: 6px; gap: 8px; font-weight: bold; }
.olist .sel { background: #c9e9f5; }

/* desktop taskbar */
.taskbar { display: flex; height: 40px; flex: none; background: linear-gradient(90deg, #1f2125 1126px, #2c2c2c 1126px); }
.start { width: 48px; padding-left: 4px; padding-top: 2px; margin-right: -1px; }
.tsearch { width: 345px; display: flex; align-items: center; background: #7a7a7a; padding: 0 15px 0 40px; }
.tsearch input { flex: 1; min-width: 0; font-size: 14px; color: #2e2e2e; }
.app-i { width: 49px; height: 40px; border-bottom: 2px solid transparent; }
.run { border-image: linear-gradient(90deg, transparent 4px, #567084 4px 45px, transparent 45px) 2; border-style: solid; border-width: 0 0 2px; }
.wx { background: #5f3e29; border-bottom-color: #8c481e; }
.rp { background: #34393b; }
.tray { display: flex; margin-left: auto; position: relative; color: #999; width: 294px; }
.clock { position: absolute; left: 167px; top: 1px; width: 70px; display: flex; flex-direction: column; align-items: center; font: 12px/19px "Noto Sans", sans-serif; white-space: nowrap; }
.note { position: absolute; right: 5px; top: 0; }

/* layers above the desktop */
.watermark { position: absolute; right: 88px; bottom: 88px; width: 201px; display: flex; flex-direction: column; color: #8f8f8f99; white-space: nowrap; }
.watermark strong { font: 21px/26px "Noto Sans", "Noto Sans CJK SC", sans-serif; }
.watermark span { font: 15px/22px "Noto Sans", "Noto Sans CJK SC", sans-serif; }
.ime { position: absolute; right: 8px; bottom: 82px; width: 158px; height: 24px; padding-left: 26px; display: flex; align-items: center; background: #fffd; border: 1px solid #b8bcc2; }
.simg { position: absolute; left: -7px; top: -5px; }
.player { position: absolute; left: 0; right: 0; bottom: 0; height: 54px; color: #fff; }
progress { display: block; appearance: none; width: 100%; height: 4px; border: 0; background: #d4d4d4; }
progress::-webkit-progress-bar { background: #d4d4d4; }
progress::-webkit-progress-value { background: #43bf78; }
.shade { height: 10px; background: #0008; }
.controls { display: flex; align-items: center; height: 30px; padding-left: 21px; font: 14px/20px "Liberation Sans", "Noto Sans CJK SC", sans-serif; }
.back10 { margin-left: 22px; }
.time { margin-left: 22px; }
.vol { margin-left: auto; }
.volume { appearance: none; width: 76px; height: 12px; margin-left: 12px; background: linear-gradient(#fff, #fff) center / 100% 4px no-repeat; }
.volume::-webkit-slider-thumb { appearance: none; width: 11px; height: 11px; border-radius: 6px; background: #fff; }
.rate { width: 44px; margin-left: 60px; }
.bar { width: 1px; height: 14px; margin-left: 40px; background: #ccc; }
.hd { margin-left: 26px; }
.full { margin: 0 23px 0 24px; }
```
